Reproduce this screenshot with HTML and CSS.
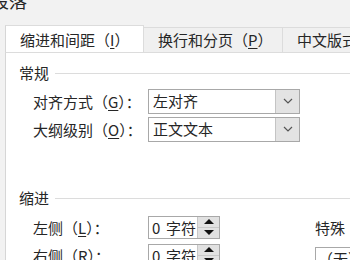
FILE: index.html
```html
<!DOCTYPE html>
<html lang="zh">
<head>
<meta charset="utf-8">
<link rel="stylesheet" href="styles.css">
</head>
<body>
<div class="dialog">
  <div class="title">段落</div>
  <div class="tabs">
    <div class="tab active">缩进和间距（<u>I</u>）</div>
    <div class="tab">换行和分页（<u>P</u>）</div>
    <div class="tab">中文版式（<u>H</u>）</div>
  </div>
  <div class="pane">
    <div class="group-head"><span>常规</span><i class="rule"></i></div>
    <div class="row">
      <span class="label">对齐方式（<u>G</u>）：</span>
      <div class="select"><span class="val">左对齐</span><span class="btn"><svg width="10" height="6" viewBox="0 0 10 6"><path d="M1 1 L5 5 L9 1" fill="none" stroke="#555" stroke-width="1.2"/></svg></span></div>
    </div>
    <div class="row">
      <span class="label">大纲级别（<u>O</u>）：</span>
      <div class="select"><span class="val">正文文本</span><span class="btn"><svg width="10" height="6" viewBox="0 0 10 6"><path d="M1 1 L5 5 L9 1" fill="none" stroke="#555" stroke-width="1.2"/></svg></span></div>
    </div>
    <div class="group-head second"><span>缩进</span><i class="rule"></i></div>
    <div class="row">
      <span class="label">左侧（<u>L</u>）：</span>
      <div class="spin"><span class="val"><span class="num">0</span>字符</span><span class="arrows"><b class="up"></b><b class="down"></b></span></div>
      <span class="label side">特殊</span>
    </div>
    <div class="row">
      <span class="label">右侧（<u>R</u>）：</span>
      <div class="spin"><span class="val"><span class="num">0</span>字符</span><span class="arrows"><b class="up"></b><b class="down"></b></span></div>
      <div class="plain">（无）</div>
    </div>
  </div>
</div>
</body>
</html>
```

FILE: styles.css
```css
html, body {
  margin: 0;
  padding: 0;
  width: 350px;
  height: 260px;
  overflow: hidden;
  background: #f2f2f2;
}
.dialog {
  font-family: "Noto Sans CJK SC", "Noto Sans", sans-serif;
  color: #262626;
  font-size: 15px;
}
u { text-decoration: underline; text-underline-offset: 2px; }
.title {
  font-size: 18px;
  line-height: 18px;
  margin-left: -9px;
  margin-top: -9px;
  height: 34px;
  box-sizing: border-box;
}
.tabs {
  display: flex;
  align-items: flex-start;
  padding-left: 5px;
  height: 27px;
  white-space: nowrap;
  overflow: hidden;
}
.tab {
  box-sizing: border-box;
  width: 139px;
  height: 26px;
  margin-top: 2px;
  padding-left: 14px;
  line-height: 24px;
  background: #f0f0f0;
  border: 1px solid #dcdcdc;
  border-left: none;
  flex-shrink: 0;
}
.tab.active {
  position: relative;
  z-index: 1;
  margin-top: 0;
  height: 28px;
  line-height: 27px;
  background: #fff;
  border-left: 1px solid #d6d6d6;
  border-bottom: none;
}
.pane {
  margin-left: 5px;
  background: #fff;
  border-left: 1px solid #d6d6d6;
  border-top: 1px solid #dcdcdc;
  height: 220px;
  padding-left: 13px;
  padding-top: 10px;
  overflow: hidden;
}
.group-head {
  display: flex;
  align-items: center;
  height: 20px;
  line-height: 20px;
  margin-bottom: 4px;
}
.group-head .rule {
  flex: 1;
  height: 1px;
  background: #dcdcdc;
  margin-left: 6px;
  margin-top: 1px;
}
.group-head.second { margin-top: 45px; margin-bottom: 5px; }
.row {
  display: flex;
  align-items: center;
  height: 28px;
  padding-left: 14px;
  white-space: nowrap;
}
.label {
  width: 115px;
  flex-shrink: 0;
}
.select {
  display: flex;
  box-sizing: border-box;
  width: 152px;
  height: 25px;
  border: 1px solid #a8a8a8;
  background: #fff;
}
.select .val {
  flex: 1;
  padding-left: 4px;
  line-height: 22px;
}
.select .btn {
  width: 23px;
  background: #e3e3e3;
  border-left: 1px solid #c4c4c4;
  display: flex;
  align-items: center;
  justify-content: center;
}
.spin {
  display: flex;
  box-sizing: border-box;
  width: 72px;
  height: 23px;
  border: 1px solid #a8a8a8;
  background: #fff;
  flex-shrink: 0;
}
.spin .val {
  flex: 1;
  padding-left: 3px;
  line-height: 21px;
}
.spin .num { display: inline-block; width: 14px; }
.spin .arrows {
  display: flex;
  flex-direction: column;
  width: 21px;
  background: #e1e1e1;
  border-left: 1px solid #c8c8c8;
}
.spin .arrows b {
  flex: 1;
  display: flex;
  align-items: center;
  justify-content: center;
}
.spin .arrows b.up { border-bottom: 1px solid #c8c8c8; }
.spin .arrows b::after {
  content: "";
  width: 0;
  height: 0;
  border-left: 5px solid transparent;
  border-right: 5px solid transparent;
}
.spin .arrows b.up::after { border-bottom: 5px solid #111; }
.spin .arrows b.down::after { border-top: 5px solid #111; }
.side { margin-left: 95px; }
.plain {
  margin-left: 95px;
  box-sizing: border-box;
  width: 60px;
  height: 23px;
  border: 1px solid #a8a8a8;
  padding-left: 2px;
  line-height: 21px;
  flex-shrink: 0;
  margin-top: 6px;
}
```
